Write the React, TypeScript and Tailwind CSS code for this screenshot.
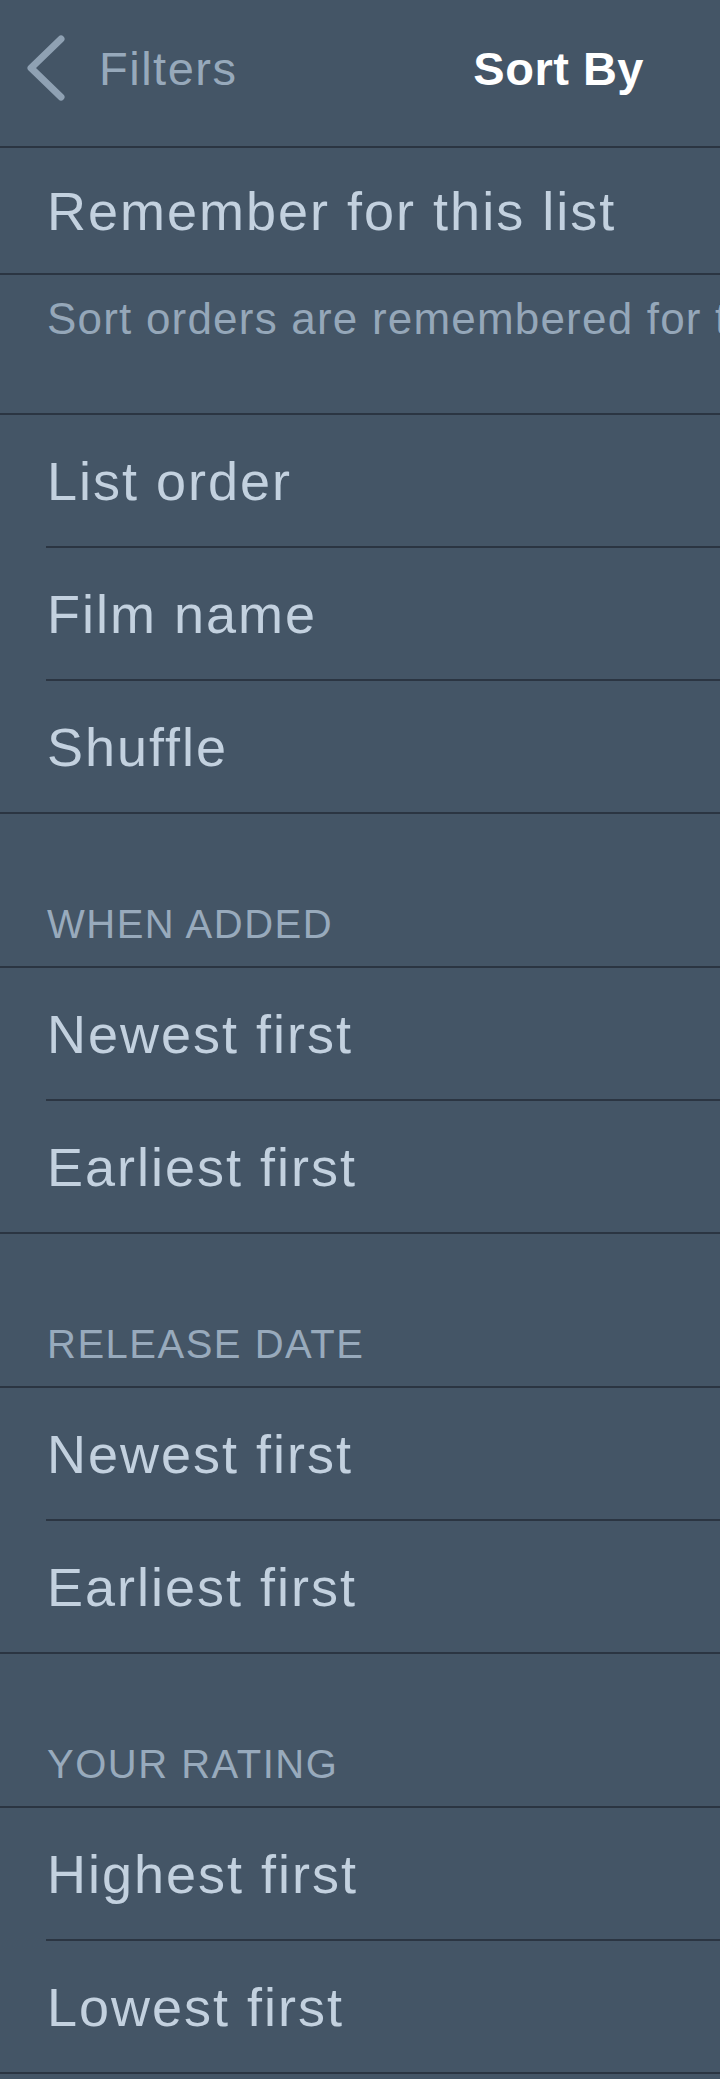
const sections = [
  { title: 'WHEN ADDED', items: ['Newest first', 'Earliest first'] },
  { title: 'RELEASE DATE', items: ['Newest first', 'Earliest first'] },
  { title: 'YOUR RATING', items: ['Highest first', 'Lowest first'] },
];

const Divider: React.FC<{ inset?: boolean }> = ({ inset }) => (
  <div className={inset ? 'ml-[46px] h-[2px] bg-[#2b3542]' : 'h-[2px] bg-[#2b3542]'} />
);

const Row: React.FC<{ label: string; last?: boolean }> = ({ label, last }) => (
  <>
    <div className="h-[131px] flex items-center pl-[47px] text-[54px] leading-none tracking-[2px] text-[#c3d1df] whitespace-nowrap">
      {label}
    </div>
    <Divider inset={!last} />
  </>
);

const SectionHeader: React.FC<{ title: string }> = ({ title }) => (
  <>
    <div className="h-[152px] flex items-end pl-[47px] pb-[22px] text-[40px] leading-none tracking-[1.5px] text-[#98aabc]">
      {title}
    </div>
    <Divider />
  </>
);

export default function App() {
  return (
    <div className="min-h-screen w-[720px] overflow-hidden bg-[#445566] font-['Liberation_Sans',Arial,sans-serif]">
      {/* Nav bar */}
      <header className="h-[146px] flex items-center pb-[10px]">
        <svg className="ml-[27px] shrink-0" width="40" height="70" viewBox="0 0 40 70" fill="none">
          <path d="M34 6 L4 35 L34 64" stroke="#8fa1b3" strokeWidth="7" strokeLinecap="round" strokeLinejoin="round" />
        </svg>
        <span className="ml-[32px] text-[47px] leading-none tracking-[1.5px] text-[#97a9bb]">Filters</span>
        <span className="ml-auto pr-[76px] text-[47px] leading-none tracking-[0.5px] font-bold text-white">Sort By</span>
      </header>
      <Divider />

      <div className="h-[125px] flex items-center pl-[47px] text-[54px] leading-none tracking-[2px] text-[#c3d1df] whitespace-nowrap">
        Remember for this list
      </div>
      <Divider />

      <div className="h-[138px] pt-[22px] pl-[47px] text-[44px] leading-none tracking-[1.2px] text-[#95a7b9] whitespace-nowrap overflow-hidden">
        Sort orders are remembered for this list
      </div>
      <Divider />

      <Row label="List order" />
      <Row label="Film name" />
      <Row label="Shuffle" last />

      {sections.map((s) => (
        <div key={s.title}>
          <SectionHeader title={s.title} />
          {s.items.map((item, i) => (
            <Row key={item} label={item} last={i === s.items.length - 1} />
          ))}
        </div>
      ))}
    </div>
  );
}
